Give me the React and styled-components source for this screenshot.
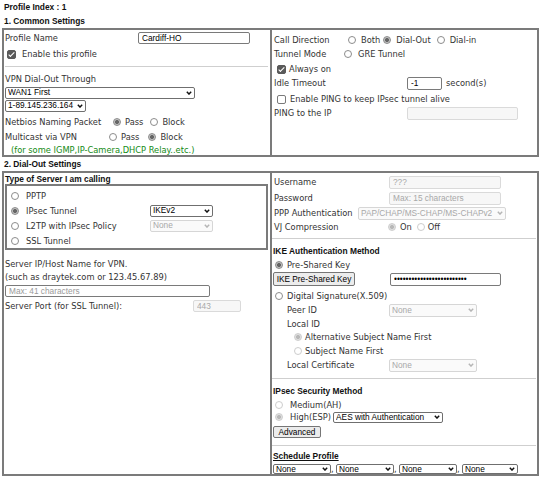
import React from 'react';
import styled, { createGlobalStyle } from 'styled-components';

const Global = createGlobalStyle`
  html, body { margin: 0; padding: 0; background: #fff; }
  body {
    font-family: "DejaVu Sans", Verdana, sans-serif;
    font-size: 8.3px;
    color: #333;
  }
  * { box-sizing: border-box; }
`;

const ARIAL = `"Liberation Sans", Arial, sans-serif`;
const BORDER = '#7b7b7b';

const Page = styled.div`
  width: 540px;
  height: 480px;
  padding: 0 1px 0 2px;
  overflow: hidden;
`;

const Heading = styled.div`
  font-family: ${ARIAL};
  font-weight: bold;
  font-size: 8.4px;
  color: #111;
  height: ${p => p.$h}px;
  display: flex;
  align-items: center;
  flex-shrink: 0;
  padding-left: ${p => p.$pl ?? 2}px;
  margin-left: ${p => p.$ml ?? 0}px;
  text-decoration: ${p => (p.$u ? 'underline' : 'none')};
`;

const Box = styled.div`
  display: grid;
  grid-template-columns: 266px 1fr;
  border: 2px solid ${BORDER};
`;

const Col = styled.div`
  display: flex;
  flex-direction: column;
  padding: ${p => p.$pt ?? 0}px 1px 0 ${p => p.$pl ?? 1}px;
  border-left: ${p => (p.$divider ? `2px solid ${BORDER}` : 'none')};
  min-width: 0;
`;

const Row = styled.div`
  display: flex;
  align-items: center;
  height: ${p => p.$h ?? 14}px;
  margin-top: ${p => p.$mt ?? 0}px;
  padding-left: ${p => p.$pl ?? 0}px;
  flex-shrink: 0;
  white-space: nowrap;
`;

const Label = styled.span`
  width: ${p => p.$w}px;
  flex-shrink: 0;
  display: inline-flex;
  align-items: center;
`;

const Note = styled(Row)`
  color: #138a13;
`;

const Sep = styled.div`
  height: 1px;
  background: #cfcfcf;
  flex-shrink: 0;
  margin: ${p => p.$mt}px ${p => p.$mr ?? 0}px ${p => p.$mb}px ${p => p.$ml ?? 0}px;
`;

const Inner = styled.div`
  border: 2px solid ${BORDER};
  margin-right: 1px;
  padding: 2px 0 0 4px;
  display: flex;
  flex-direction: column;
`;

const TextInput = styled.input`
  width: ${p => p.$w}px;
  height: ${p => p.$h ?? 13}px;
  font-family: ${ARIAL};
  font-size: 8.3px;
  color: #000;
  border: 1px solid #7a7a7a;
  border-radius: 2px;
  padding: 0 3px;
  margin: 0;
  background: #fff;
  outline: none;
  flex-shrink: 0;
  &::placeholder { color: #9a9a9a; }
  &:disabled {
    background: #f7f7f7;
    border-color: #dadada;
    color: #a8a8a8;
  }
  &:disabled::placeholder { color: #a8a8a8; }
`;

const SelectWrap = styled.span`
  position: relative;
  display: inline-flex;
  width: ${p => p.$w}px;
  height: ${p => p.$h ?? 12}px;
  margin-left: ${p => p.$ml ?? 0}px;
  flex-shrink: 0;
`;

const SelectBox = styled.select`
  appearance: none;
  -webkit-appearance: none;
  width: 100%;
  height: 100%;
  margin: 0;
  padding: 0 8px 0 2px;
  font-family: ${ARIAL};
  font-size: 8.3px;
  line-height: 1;
  color: #000;
  background: #fff;
  border: 1px solid #6f6f6f;
  border-radius: 2px;
  outline: none;
  &:disabled {
    color: #a8a8a8;
    border-color: #d6d6d6;
    background: #fafafa;
    opacity: 1;
  }
`;

const Chevron = styled.svg`
  position: absolute;
  right: 3px;
  top: 50%;
  transform: translateY(-50%);
  pointer-events: none;
`;

const Select = ({ w, h, ml, disabled, children }) => (
  <SelectWrap $w={w} $h={h} $ml={ml}>
    <SelectBox disabled={disabled} defaultValue={children}>
      <option>{children}</option>
    </SelectBox>
    <Chevron width="6" height="4" viewBox="0 0 6 4">
      <polyline
        points="0.8,0.8 3,3.1 5.2,0.8"
        fill="none"
        stroke={disabled ? '#b5b5b5' : '#111'}
        strokeWidth="1.4"
      />
    </Chevron>
  </SelectWrap>
);

const Radio = styled.input.attrs({ type: 'radio' })`
  appearance: none;
  -webkit-appearance: none;
  margin: 0;
  width: 8px;
  height: 8px;
  border-radius: 50%;
  border: 1px solid #8c8c8c;
  background: #fff;
  flex-shrink: 0;
  &:checked {
    background: radial-gradient(circle, #666 0 1.7px, #c2c2c2 2.3px);
  }
  &:disabled { border-color: #cdcdcd; }
  &:disabled:checked {
    background: radial-gradient(circle, #b8b8b8 0 1.7px, #e0e0e0 2.3px);
  }
`;

const Check = styled.input.attrs({ type: 'checkbox' })`
  appearance: none;
  -webkit-appearance: none;
  margin: 0;
  width: 9px;
  height: 9px;
  border: 1px solid #7a7a7a;
  border-radius: 2px;
  background: #fff;
  position: relative;
  flex-shrink: 0;
  &:checked {
    background: #5a5a5a;
    border-color: #5a5a5a;
  }
  &:checked::after {
    content: '';
    position: absolute;
    left: 2.2px;
    top: 0.2px;
    width: 2.4px;
    height: 4.8px;
    border: solid #fff;
    border-width: 0 1.3px 1.3px 0;
    transform: rotate(45deg);
  }
`;

const Option = styled.label`
  display: inline-flex;
  align-items: center;
  gap: ${p => p.$gap ?? 4}px;
  margin-left: ${p => p.$ml ?? 0}px;
  margin-right: ${p => p.$mr ?? 0}px;
`;

const Btn = styled.button`
  width: ${p => p.$w}px;
  height: ${p => p.$h}px;
  margin: 0 0 0 ${p => p.$ml ?? 0}px;
  padding: 0;
  font-family: ${ARIAL};
  font-size: 8.3px;
  color: #000;
  background: #ececec;
  border: 1px solid #767676;
  border-radius: 2px;
  flex-shrink: 0;
`;

const Comma = styled.span`
  width: 5px;
  flex-shrink: 0;
`;

const Unit = styled.span`
  margin-left: 4px;
`;

function ScheduleSelects() {
  return (
    <>
      <Select w={58} h={10} ml={-1}>None</Select>
      <Comma>,</Comma>
      <Select w={58} h={10}>None</Select>
      <Comma>,</Comma>
      <Select w={58} h={10}>None</Select>
      <Comma>,</Comma>
      <Select w={56} h={10}>None</Select>
    </>
  );
}

export default function App() {
  return (
    <Page>
      <Global />
      <Heading $h={13}>Profile Index : 1</Heading>
      <Heading $h={15}>1. Common Settings</Heading>
      <Box>
        <Col $pl={1}>
          <Row $h={16}>
            <Label $w={133}>Profile Name</Label>
            <TextInput $w={112} $h={12} defaultValue="Cardiff-HO" />
          </Row>
          <Row $h={16}>
            <Option $gap={6} $ml={2}>
              <Check defaultChecked />
              Enable this profile
            </Option>
          </Row>
          <Sep $mt={4} $mb={5} $mr={1} />
          <Row $h={14}>VPN Dial-Out Through</Row>
          <Row $h={13}>
            <Select w={190} h={12}>WAN1 First</Select>
          </Row>
          <Row $h={13}>
            <Select w={81} h={12}>1-89.145.236.164</Select>
          </Row>
          <Row $h={15} $mt={2}>
            <Label $w={108}>Netbios Naming Packet</Label>
            <Option $gap={4} $mr={7}>
              <Radio name="nb" defaultChecked />
              Pass
            </Option>
            <Option $gap={4}>
              <Radio name="nb" />
              Block
            </Option>
          </Row>
          <Row $h={15}>
            <Label $w={104}>Multicast via VPN</Label>
            <Option $gap={4} $mr={9}>
              <Radio name="mc" />
              Pass
            </Option>
            <Option $gap={4}>
              <Radio name="mc" defaultChecked />
              Block
            </Option>
          </Row>
          <Note $h={11} $pl={6}>(for some IGMP,IP-Camera,DHCP Relay..etc.)</Note>
        </Col>

        <Col $divider $pl={2} $pt={3}>
          <Row $h={14}>
            <Label $w={74}>Call Direction</Label>
            <Option $gap={5} $mr={3}>
              <Radio name="cd" />
              Both
            </Option>
            <Option $gap={5} $mr={6}>
              <Radio name="cd" defaultChecked />
              Dial-Out
            </Option>
            <Option $gap={5}>
              <Radio name="cd" />
              Dial-in
            </Option>
          </Row>
          <Row $h={14}>
            <Label $w={70}>Tunnel Mode</Label>
            <Option $gap={6}>
              <Radio name="tm" />
              GRE Tunnel
            </Option>
          </Row>
          <Row $h={14} $mt={1}>
            <Option $gap={3} $ml={3}>
              <Check defaultChecked />
              Always on
            </Option>
          </Row>
          <Row $h={14}>
            <Label $w={133}>Idle Timeout</Label>
            <TextInput $w={35} $h={13} defaultValue="-1" />
            <Unit>second(s)</Unit>
          </Row>
          <Row $h={14} $mt={2}>
            <Option $gap={4} $ml={3}>
              <Check />
              Enable PING to keep IPsec tunnel alive
            </Option>
          </Row>
          <Row $h={14}>
            <Label $w={133}>PING to the IP</Label>
            <TextInput $w={111} $h={13} disabled />
          </Row>
        </Col>
      </Box>

      <Heading $h={14}>2. Dial-Out Settings</Heading>
      <Box>
        <Col $pl={1}>
          <Heading $h={11} $pl={0}>Type of Server I am calling</Heading>
          <Inner>
            <Row $h={15}>
              <Option $gap={7}>
                <Radio name="st" />
                PPTP
              </Option>
            </Row>
            <Row $h={15}>
              <Label $w={139}>
                <Option $gap={7}>
                  <Radio name="st" defaultChecked />
                  IPsec Tunnel
                </Option>
              </Label>
              <Select w={63} h={12}>IKEv2</Select>
            </Row>
            <Row $h={15}>
              <Label $w={139}>
                <Option $gap={7}>
                  <Radio name="st" />
                  L2TP with IPsec Policy
                </Option>
              </Label>
              <Select w={63} h={12} disabled>None</Select>
            </Row>
            <Row $h={15}>
              <Option $gap={7}>
                <Radio name="st" />
                SSL Tunnel
              </Option>
            </Row>
          </Inner>
          <Row $h={14} $mt={7}>Server IP/Host Name for VPN.</Row>
          <Row $h={12}>(such as draytek.com or 123.45.67.89)</Row>
          <Row $h={13} $mt={1}>
            <TextInput $w={205} $h={12} placeholder="Max: 41 characters" />
          </Row>
          <Row $h={14} $mt={2}>
            <Label $w={188}>Server Port (for SSL Tunnel):</Label>
            <TextInput $w={48} $h={12} disabled defaultValue="443" />
          </Row>
        </Col>

        <Col $divider $pl={2} $pt={1}>
          <Row $h={16}>
            <Label $w={115}>Username</Label>
            <TextInput $w={112} $h={13} disabled defaultValue="???" />
          </Row>
          <Row $h={16}>
            <Label $w={115}>Password</Label>
            <TextInput $w={112} $h={13} disabled placeholder="Max: 15 characters" />
          </Row>
          <Row $h={14}>
            <Label $w={84}>PPP Authentication</Label>
            <Select w={148} h={13} disabled>PAP/CHAP/MS-CHAP/MS-CHAPv2</Select>
          </Row>
          <Row $h={14}>
            <Label $w={114}>VJ Compression</Label>
            <Option $gap={4} $mr={5}>
              <Radio name="vj" disabled defaultChecked />
              On
            </Option>
            <Option $gap={3}>
              <Radio name="vj" disabled />
              Off
            </Option>
          </Row>
          <Sep $mt={4} $mb={5} $ml={-2} />
          <Heading $h={14} $pl={0} $ml={-1}>IKE Authentication Method</Heading>
          <Row $h={14}>
            <Option $gap={4} $ml={1}>
              <Radio name="ike" defaultChecked />
              Pre-Shared Key
            </Option>
          </Row>
          <Row $h={14}>
            <Label $w={116}>
              <Btn $w={82} $h={14} $ml={-1}>IKE Pre-Shared Key</Btn>
            </Label>
            <TextInput type="password" $w={111} $h={13} defaultValue="abcdefghijklmnopqrstuvwxy" />
          </Row>
          <Row $h={14} $mt={3}>
            <Option $gap={4} $ml={1}>
              <Radio name="ike" />
              Digital Signature(X.509)
            </Option>
          </Row>
          <Row $h={14} $pl={13}>
            <Label $w={102}>Peer ID</Label>
            <Select w={88} h={13} disabled>None</Select>
          </Row>
          <Row $h={13} $pl={13}>Local ID</Row>
          <Row $h={14} $pl={20}>
            <Option $gap={3}>
              <Radio name="lid" disabled defaultChecked />
              Alternative Subject Name First
            </Option>
          </Row>
          <Row $h={14} $pl={20}>
            <Option $gap={3}>
              <Radio name="lid" disabled />
              Subject Name First
            </Option>
          </Row>
          <Row $h={14} $pl={13}>
            <Label $w={102}>Local Certificate</Label>
            <Select w={88} h={13} disabled>None</Select>
          </Row>
          <Sep $mt={6} $mb={5} $ml={-2} />
          <Heading $h={14} $pl={0} $ml={-1}>IPsec Security Method</Heading>
          <Row $h={13}>
            <Option $gap={7} $ml={1}>
              <Radio name="sec" disabled />
              Medium(AH)
            </Option>
          </Row>
          <Row $h={12}>
            <Option $gap={7} $ml={1}>
              <Radio name="sec" disabled defaultChecked />
              High(ESP)
            </Option>
            <Select w={110} h={11} ml={2}>AES with Authentication</Select>
          </Row>
          <Row $h={14} $mt={2}>
            <Btn $w={48} $h={12} $ml={-1}>Advanced</Btn>
          </Row>
          <Sep $mt={6} $mb={3} $ml={-2} />
          <Heading $h={14} $pl={0} $ml={-1} $u>Schedule Profile</Heading>
          <Row $h={11}>
            <ScheduleSelects />
          </Row>
        </Col>
      </Box>
    </Page>
  );
}
